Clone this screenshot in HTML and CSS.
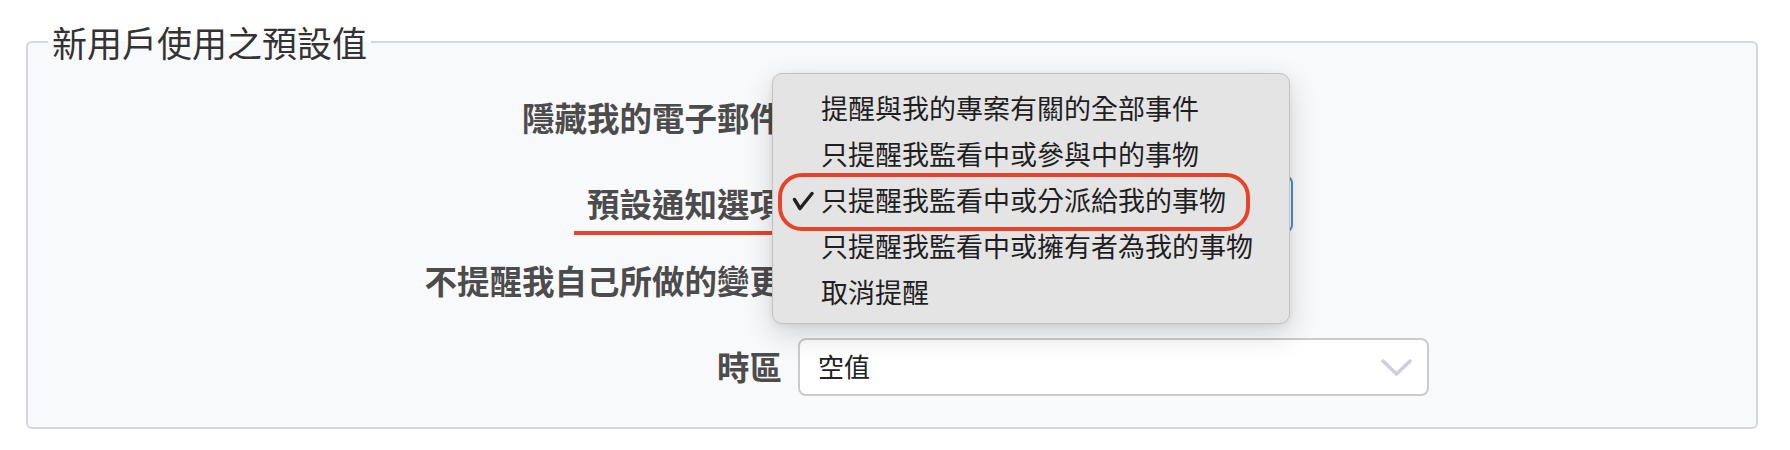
FILE: index.html
```html
<!DOCTYPE html>
<html lang="zh-Hant">
<head>
<meta charset="utf-8">
<title>新用戶使用之預設值</title>
<link rel="stylesheet" href="styles.css">
</head>
<body>
<div class="page">
  <fieldset class="panel">
    <legend class="panel-title">新用戶使用之預設值</legend>
    <div class="form">
      <div class="row">
        <label class="label">隱藏我的電子郵件</label>
        <div class="field"><span class="checkbox"></span></div>
      </div>
      <div class="row">
        <label class="label">預設通知選項</label>
        <div class="field">
          <div class="select select-focus" aria-label="只提醒我監看中或分派給我的事物"></div>
        </div>
      </div>
      <div class="row row-tight">
        <label class="label">不提醒我自己所做的變更</label>
        <div class="field"><span class="checkbox"></span></div>
      </div>
      <div class="row">
        <label class="label">時區</label>
        <div class="field">
          <div class="select select-wide">
            <span class="select-value">空值</span>
            <svg class="chevron" width="31" height="17" viewBox="0 0 31 17" aria-hidden="true">
              <polyline points="2,2 15.5,15 29,2" fill="none" stroke="#cfcde2" stroke-width="3.5" stroke-linecap="round" stroke-linejoin="round"/>
            </svg>
          </div>
        </div>
      </div>
    </div>
  </fieldset>

  <span class="mark-underline"></span>

  <ul class="menu">
    <li class="menu-item">提醒與我的專案有關的全部事件</li>
    <li class="menu-item">只提醒我監看中或參與中的事物</li>
    <li class="menu-item is-selected">
      <svg class="menu-check" width="22" height="20" viewBox="0 0 22 20" aria-hidden="true">
        <polyline points="2.5,8.5 8,17.5 20,2.5" fill="none" stroke="#222" stroke-width="3.4" stroke-linecap="round" stroke-linejoin="round"/>
      </svg>只提醒我監看中或分派給我的事物</li>
    <li class="menu-item">只提醒我監看中或擁有者為我的事物</li>
    <li class="menu-item">取消提醒</li>
  </ul>
</div>
</body>
</html>
```

FILE: styles.css
```css
* {
  box-sizing: border-box;
}

html,
body {
  margin: 0;
  background: #ffffff;
}

body {
  width: 1790px;
  height: 450px;
  overflow: hidden;
  font-family: "Noto Sans CJK TC", "Noto Sans", sans-serif;
  color: #333333;
}

.page {
  position: relative;
  padding: 21px 32px 0 26px;
}

.panel {
  margin: 0;
  min-width: 0;
  border: 2px solid #d5d7dc;
  border-radius: 6px;
  background: #f8f9fb;
  padding: 0 20px 31px 20px;
}

.panel-title {
  padding: 0 4px;
  font-size: 35px;
  line-height: 42px;
  font-weight: 400;
  color: #333333;
}

.form {
  display: flex;
  flex-direction: column;
  padding-top: 26px;
}

.row {
  display: grid;
  grid-template-columns: 734px 1fr;
  column-gap: 16px;
  align-items: center;
  height: 58px;
}

.row + .row {
  margin-top: 28px;
}

.row + .row-tight {
  margin-top: 19px;
}

.label {
  text-align: right;
  white-space: nowrap;
  font-size: 32.5px;
  line-height: 39px;
  font-weight: 700;
  color: #4c4c4c;
  padding-bottom: 4px;
}

.field {
  display: flex;
  align-items: center;
}

.checkbox {
  width: 26px;
  height: 26px;
  border: 2px solid #bbbbbb;
  border-radius: 5px;
  background: #ffffff;
}

.select {
  display: flex;
  align-items: center;
  height: 58px;
  border: 2px solid #cbcbcb;
  border-radius: 8px;
  background: #ffffff;
  padding: 0 15px 2px 18px;
}

.select-wide {
  width: 631px;
}

.select-focus {
  width: 495px;
  border-color: #4f8cc6;
}

.select-value {
  font-size: 26px;
  line-height: 34px;
  color: #222222;
  white-space: nowrap;
}

.chevron {
  margin-left: auto;
  margin-top: 2px;
}

.mark-underline {
  position: absolute;
  left: 574px;
  top: 231px;
  width: 205px;
  height: 4px;
  background: #e8432b;
}

.menu {
  position: absolute;
  left: 772px;
  top: 73px;
  width: 518px;
  height: 251px;
  margin: 0;
  padding: 11px 0 0 48px;
  list-style: none;
  background: #e4e4e4;
  border: 1px solid #c2c2c2;
  border-radius: 10px;
  box-shadow: 0 10px 30px rgba(0, 0, 0, 0.16), 0 2px 6px rgba(0, 0, 0, 0.06);
}

.menu-item {
  position: relative;
  font-size: 27px;
  line-height: 46px;
  height: 46px;
  color: #1f1f1f;
  white-space: nowrap;
}

.menu-check {
  position: absolute;
  left: -29px;
  top: 14px;
}

.is-selected::before {
  content: "";
  position: absolute;
  left: -43px;
  top: -4px;
  width: 464px;
  height: 50px;
  border: 4px solid #e5432a;
  border-radius: 24px;
}
```
